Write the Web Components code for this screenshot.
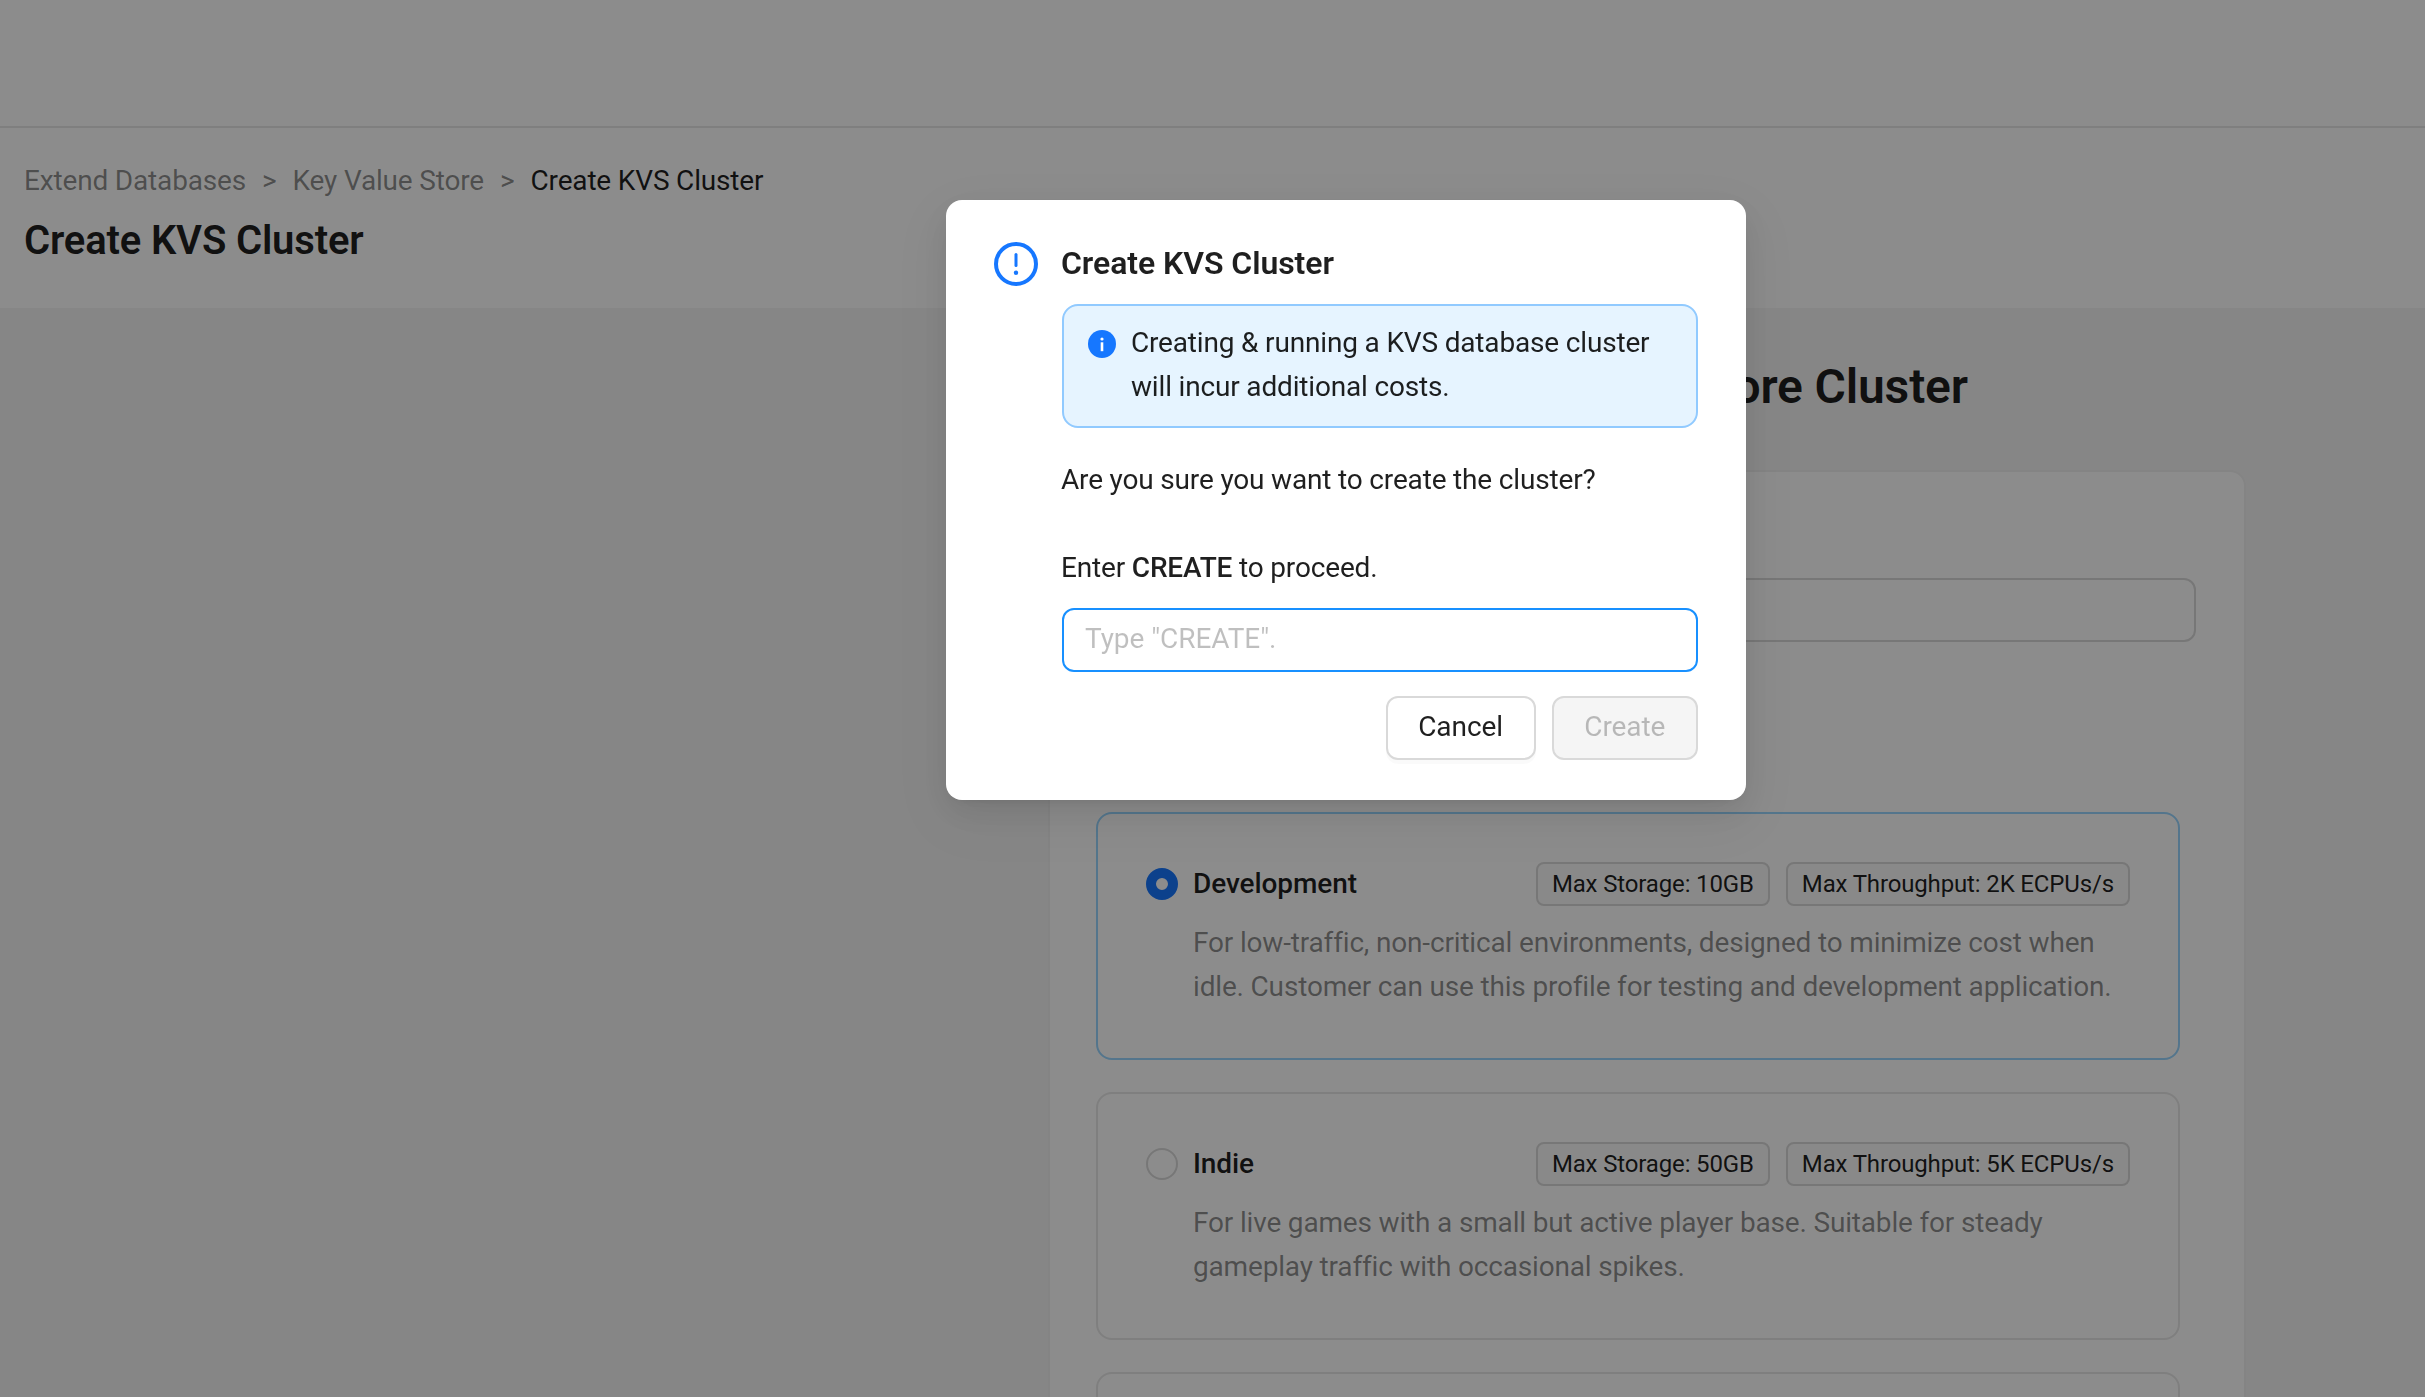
<!DOCTYPE html>
<html lang="en">
<head>
<meta charset="utf-8">
<title>Create KVS Cluster</title>
<style>
  html, body { margin: 0; height: 100%; overflow: hidden; }
  body { background: #f5f5f5; font-family: Roboto, "Liberation Sans", sans-serif; letter-spacing: -.17px; color: rgba(0,0,0,.88); }
</style>
</head>
<body>
<kvs-page>
  <plan-card slot="plans" selected name="Development" storage="10GB" throughput="2K"
    text="For low-traffic, non-critical environments, designed to minimize cost when idle. Customer can use this profile for testing and development application."></plan-card>
  <plan-card slot="plans" name="Indie" storage="50GB" throughput="5K"
    text="For live games with a small but active player base. Suitable for steady gameplay traffic with occasional spikes."></plan-card>
  <plan-card slot="plans"></plan-card>
</kvs-page>
<confirm-dialog heading="Create KVS Cluster">
  <info-alert>Creating &amp; running a KVS database cluster will incur additional costs.</info-alert>
</confirm-dialog>

<script>
// Small helper: every element gets an open shadow root from a string
class ShadowEl extends HTMLElement {
  render(html) {
    if (!this.shadowRoot) this.attachShadow({ mode: 'open' });
    this.shadowRoot.innerHTML = html;
  }
}

// Breadcrumb + page title strip
class PageHeader extends ShadowEl {
  connectedCallback() {
    this.render(`
      <style>
        :host { display: block; background: #fff; border-top: 2px solid #e8e8e8; padding: 31px 24px 39px; }
        nav { display: flex; font-size: 28px; line-height: 44px; color: rgba(0,0,0,.45); }
        nav i { font-style: normal; margin: 0 16px; }
        nav b { font-weight: 400; color: rgba(0,0,0,.88); }
        h1 { margin: 10px 0 0; font-size: 40px; line-height: 56px; font-weight: 600; color: rgba(0,0,0,.88); }
      </style>
      <nav><span>Extend Databases</span><i>&gt;</i><span>Key Value Store</span><i>&gt;</i><b>Create KVS Cluster</b></nav>
      <h1>Create KVS Cluster</h1>`);
  }
}
customElements.define('page-header', PageHeader);

// One selectable profile in the list
class PlanCard extends ShadowEl {
  connectedCallback() {
    const name = this.getAttribute('name');
    const body = name ? `
      <div class="head">
        <span class="radio"></span>
        <span class="name">${name}</span>
        <span class="tags">
          <span class="tag">Max Storage: ${this.getAttribute('storage')}</span>
          <span class="tag">Max Throughput: ${this.getAttribute('throughput')} ECPUs/s</span>
        </span>
      </div>
      <p>${this.getAttribute('text')}</p>` : '';
    this.render(`
      <style>
        :host { display: block; box-sizing: border-box; min-height: 248px; padding: 48px; background: #fff; border: 2px solid #e8e8e8; border-radius: 16px; }
        :host([selected]) { border-color: #99d6ff; }
        .head { display: flex; align-items: center; height: 44px; }
        .radio { box-sizing: border-box; width: 32px; height: 32px; border-radius: 50%; border: 2px solid #d9d9d9; background: #fff; margin-right: 15px; flex: none; }
        :host([selected]) .radio { border: 10px solid #1677ff; }
        .name { font-size: 28px; font-weight: 500; letter-spacing: -.08px; margin-bottom: 2px; color: rgba(0,0,0,.88); }
        .tags { margin-left: auto; display: flex; gap: 16px; }
        .tag { box-sizing: border-box; height: 44px; line-height: 40px; padding: 0 14px; font-size: 24px; letter-spacing: -.144px; color: rgba(0,0,0,.88); background: rgba(0,0,0,.02); border: 2px solid #d9d9d9; border-radius: 8px; white-space: nowrap; }
        p { margin: 15px 0 0 47px; font-size: 28px; line-height: 44px; color: rgba(0,0,0,.45); }
      </style>
      ${body}`);
  }
}
customElements.define('plan-card', PlanCard);

// Page behind the dialog
class KvsPage extends ShadowEl {
  connectedCallback() {
    this.render(`
      <style>
        :host { display: block; height: 100vh; overflow: hidden; }
        .top { height: 126px; background: #fff; }
        main { display: grid; grid-template-columns: 1048px 1198px; }
        .col { grid-column: 2; }
        h2 { margin: 47px 0 51px; padding-right: 12px; font-size: 48px; line-height: 64px; font-weight: 600; text-align: center; color: rgba(0,0,0,.88); }
        .card { box-sizing: border-box; height: 1100px; padding: 106px 48px 0 46px; background: #fff; border: 2px solid #f0f0f0; border-radius: 16px; }
        .field { box-sizing: border-box; height: 64px; border: 2px solid #d9d9d9; border-radius: 12px; margin-bottom: 170px; }
        .plans { display: flex; flex-direction: column; gap: 32px; width: 1084px; }
      </style>
      <div class="top"></div>
      <page-header></page-header>
      <main>
        <div class="col">
          <h2>Create Key Value Store Cluster</h2>
          <div class="card">
            <div class="field"></div>
            <div class="plans"><slot name="plans"></slot></div>
          </div>
        </div>
      </main>`);
  }
}
customElements.define('kvs-page', KvsPage);

// Blue info box inside the dialog
class InfoAlert extends ShadowEl {
  connectedCallback() {
    this.render(`
      <style>
        :host { display: flex; gap: 15px; box-sizing: border-box; padding: 15px 24px 17px; background: #e6f4ff; border: 2px solid #91caff; border-radius: 16px; font-size: 28px; line-height: 44px; color: rgba(0,0,0,.88); }
        svg { width: 28px; height: 28px; flex: none; margin-top: 9px; }
      </style>
      <svg viewBox="0 0 28 28"><circle cx="14" cy="14" r="14" fill="#1677ff"/><circle cx="14" cy="9" r="1.6" fill="#fff"/><rect x="12.7" y="12.3" width="2.6" height="8.9" fill="#fff"/></svg>
      <div><slot></slot></div>`);
  }
}
customElements.define('info-alert', InfoAlert);

class UiButton extends ShadowEl {
  connectedCallback() {
    this.render(`
      <style>
        :host { display: inline-block; box-sizing: border-box; height: 64px; line-height: 57px; padding: 0 30.6px; font-size: 28px; letter-spacing: -.064px; color: rgba(0,0,0,.88); background: #fff; border: 2px solid #d9d9d9; border-radius: 12px; box-shadow: 0 4px 0 rgba(0,0,0,.02); }
        :host([disabled]) { color: rgba(0,0,0,.25); background: #f5f5f5; box-shadow: none; }
      </style>
      <slot></slot>`);
  }
}
customElements.define('ui-button', UiButton);

// The modal itself, with the page dimmed behind it
class ConfirmDialog extends ShadowEl {
  connectedCallback() {
    this.render(`
      <style>
        :host { position: fixed; inset: 0; background: rgba(0,0,0,.45); font-size: 28px; line-height: 44px; color: rgba(0,0,0,.88); }
        .modal { position: absolute; left: 946px; top: 200px; box-sizing: border-box; width: 800px; height: 600px; padding: 42px 48px 0; background: #fff; border-radius: 16px; box-shadow: 0 12px 32px rgba(0,0,0,.08), 0 6px 12px -8px rgba(0,0,0,.12), 0 18px 56px 16px rgba(0,0,0,.05); }
        .head { display: flex; align-items: center; gap: 23px; height: 44px; margin-bottom: 18px; }
        .head svg { width: 44px; height: 44px; flex: none; }
        h3 { margin: 0 0 3px; font-size: 32px; line-height: 44px; font-weight: 600; letter-spacing: -.064px; }
        .body { margin-left: 68px; }
        p { margin: 0 0 0 -1px; }
        .q { margin: 30px 0 44px -1px; }
        b { font-weight: 500; }
        input { display: block; box-sizing: border-box; width: 100%; height: 64px; margin-top: 18px; padding: 0 21px 4px; font: 28px Roboto, "Liberation Sans", sans-serif; letter-spacing: -.064px; border: 2px solid #1890ff; border-radius: 12px; outline: none; }
        input::placeholder { color: rgba(0,0,0,.25); opacity: 1; }
        .actions { display: flex; justify-content: flex-end; gap: 16px; margin-top: 24px; }
      </style>
      <div class="modal">
        <div class="head">
          <svg viewBox="0 0 44 44"><circle cx="22" cy="22" r="20" fill="none" stroke="#1677ff" stroke-width="4"/><line x1="22" y1="12.5" x2="22" y2="23.5" stroke="#1677ff" stroke-width="3" stroke-linecap="round"/><circle cx="22" cy="30.7" r="2.2" fill="#1677ff"/></svg>
          <h3>${this.getAttribute('heading')}</h3>
        </div>
        <div class="body">
          <slot></slot>
          <p class="q">Are you sure you want to create the cluster?</p>
          <p>Enter <b>CREATE</b> to proceed.</p>
          <input placeholder='Type "CREATE".'>
          <div class="actions"><ui-button>Cancel</ui-button><ui-button disabled>Create</ui-button></div>
        </div>
      </div>`);
  }
}
customElements.define('confirm-dialog', ConfirmDialog);
</script>
</body>
</html>
